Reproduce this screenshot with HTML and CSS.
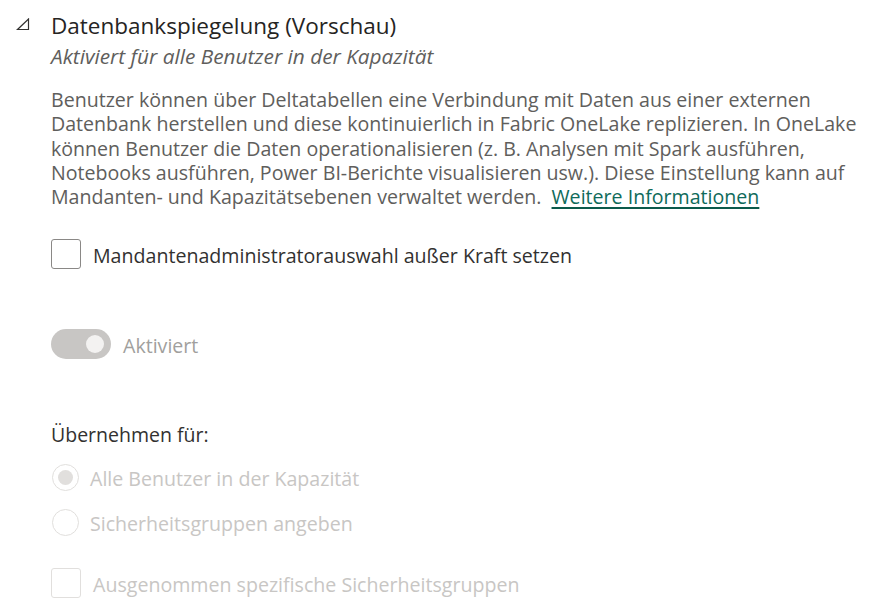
FILE: index.html
```html
<!DOCTYPE html>
<html lang="de">
<head>
<meta charset="utf-8">
<title>Datenbankspiegelung</title>
<link rel="stylesheet" href="styles.css">
</head>
<body>
<div class="setting">
  <div class="chevron">
    <svg width="14" height="13" viewBox="0 0 14 13"><path d="M1.5 11.5 L12.5 11.5 L12.5 1 Z" fill="none" stroke="#323130" stroke-width="1.2" stroke-linejoin="miter"/></svg>
  </div>
  <div class="content">
    <div class="title">Datenbankspiegelung (Vorschau)</div>
    <div class="subtitle">Aktiviert für alle Benutzer in der Kapazität</div>
    <p class="desc">Benutzer können über Deltatabellen eine Verbindung mit Daten aus einer externen<br>Datenbank herstellen und diese kontinuierlich in Fabric OneLake replizieren. In OneLake<br>können Benutzer die Daten operationalisieren (z. B. Analysen mit Spark ausführen,<br>Notebooks ausführen, Power BI-Berichte visualisieren usw.). Diese Einstellung kann auf<br>Mandanten- und Kapazitätsebenen verwaltet werden. &nbsp;<a class="link" href="#">Weitere Informationen</a></p>

    <div class="row override">
      <span class="box"></span>
      <span class="label">Mandantenadministratorauswahl außer Kraft setzen</span>
    </div>

    <div class="row toggle-row">
      <span class="toggle"><span class="knob"></span></span>
      <span class="label muted">Aktiviert</span>
    </div>

    <div class="apply">Übernehmen für:</div>

    <div class="row radio-row">
      <span class="radio"><span class="dot"></span></span>
      <span class="label faint">Alle Benutzer in der Kapazität</span>
    </div>
    <div class="row radio-row">
      <span class="radio"></span>
      <span class="label faint">Sicherheitsgruppen angeben</span>
    </div>

    <div class="row except">
      <span class="box disabled"></span>
      <span class="label faint">Ausgenommen spezifische Sicherheitsgruppen</span>
    </div>
  </div>
</div>
</body>
</html>
```

FILE: styles.css
```css
html, body {
  margin: 0;
  padding: 0;
  background: #ffffff;
}
body {
  font-family: "Open Sans", "Noto Sans", sans-serif;
  color: #323130;
}
.setting {
  display: flex;
  padding-top: 13px;
}
.chevron {
  width: 51px;
  flex: none;
  padding-top: 5px;
  padding-left: 16px;
  box-sizing: border-box;
}
.chevron svg {
  display: block;
}
.content {
  flex: 1;
  min-width: 0;
}
.title {
  font-size: 22.5px;
  line-height: 26px;
  color: #252423;
}
.subtitle {
  margin-top: 5px;
  font-size: 20.8px;
  line-height: 24px;
  font-style: italic;
  color: #605e5c;
}
.desc {
  margin: 20px 0 0;
  white-space: nowrap;
  font-size: 19.6px;
  line-height: 24.3px;
  color: #605e5c;
}
.link {
  color: #0f6b5b;
  text-decoration: underline;
  text-decoration-color: #0b5a4b;
  text-decoration-thickness: 2px;
  text-underline-offset: 3px;
}
.row {
  display: flex;
  align-items: center;
  height: 30px;
}
.label {
  font-size: 19.6px;
  line-height: 30px;
  margin-top: 4px;
  color: #323130;
  white-space: nowrap;
}
.override {
  margin-top: 30px;
}
.box {
  width: 30px;
  height: 30px;
  box-sizing: border-box;
  border: 1px solid #8a8886;
  border-radius: 3px;
  margin-right: 12px;
  flex: none;
}
.box.disabled {
  border-color: #e1dfdd;
}
.toggle-row {
  margin-top: 60px;
}
.toggle {
  width: 60px;
  height: 30px;
  border-radius: 15px;
  background: #c8c6c4;
  margin-right: 12px;
  flex: none;
  display: flex;
  align-items: center;
  justify-content: flex-end;
  padding-right: 7px;
  box-sizing: border-box;
}
.knob {
  width: 18px;
  height: 18px;
  border-radius: 50%;
  background: #f3f2f1;
}
.muted {
  color: #a19f9d;
}
.apply {
  margin-top: 64px;
  font-size: 19.5px;
  line-height: 24px;
  color: #323130;
}
.radio-row {
  margin-top: 15px;
}
.radio {
  width: 27px;
  height: 27px;
  box-sizing: border-box;
  border: 1px solid #e1dfdd;
  border-radius: 50%;
  margin: 0 11px 0 1px;
  flex: none;
  display: flex;
  align-items: center;
  justify-content: center;
}
.dot {
  width: 15px;
  height: 15px;
  border-radius: 50%;
  background: #e1dfdd;
}
.faint {
  color: #c8c6c4;
}
.except {
  margin-top: 31px;
}
```
